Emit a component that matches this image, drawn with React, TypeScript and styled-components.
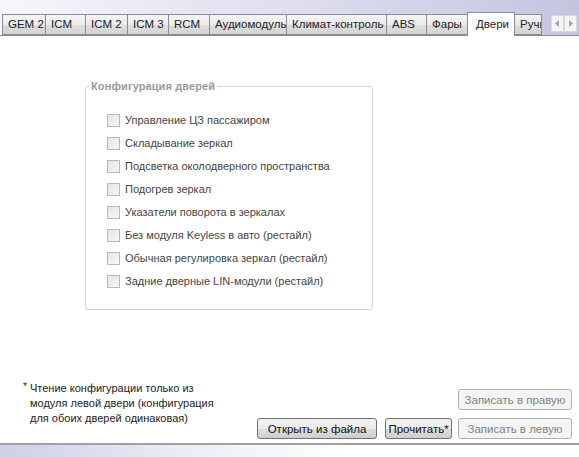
import styled, { createGlobalStyle } from "styled-components";

/*
 * DOOR CONFIGURATION TAB
 */

const GlobalStyle = createGlobalStyle`
  html, body { margin: 0; padding: 0; }
  body {
    width: 579px;
    height: 457px;
    overflow: hidden;
    font-family: "Liberation Sans", Arial, sans-serif;
    font-size: 11px;
    color: #333;
    background: #fff;
  }
`;

const tabs = [
  { label: "GEM 2", w: 44 },
  { label: "ICM", w: 41 },
  { label: "ICM 2", w: 43 },
  { label: "ICM 3", w: 42 },
  { label: "RCM", w: 42 },
  { label: "Аудиомодуль", w: 78 },
  { label: "Климат-контроль", w: 101 },
  { label: "ABS", w: 41 },
  { label: "Фары", w: 42 },
  { label: "Двери", w: 48, active: true },
  { label: "Ручн", w: 28 },
];

const options = [
  "Управление ЦЗ пассажиром",
  "Складывание зеркал",
  "Подсветка околодверного пространства",
  "Подогрев зеркал",
  "Указатели поворота в зеркалах",
  "Без модуля Keyless в авто (рестайл)",
  "Обычная регулировка зеркал (рестайл)",
  "Задние дверные LIN-модули (рестайл)",
];

const App = () => {
  return (
    <>
      <GlobalStyle />
      <Page>
        <TabBar>
          {tabs.map((t) => (
            <Tab key={t.label} $w={t.w} $active={!!t.active}>
              {t.label}
            </Tab>
          ))}
          <Scroller>
            <ScrollBtn>
              <svg width="5" height="7" viewBox="0 0 5 7"><path d="M4 0L0 3.5L4 7Z" fill="#a0a0a0" /></svg>
            </ScrollBtn>
            <ScrollBtn>
              <svg width="5" height="7" viewBox="0 0 5 7"><path d="M1 0L5 3.5L1 7Z" fill="#a0a0a0" /></svg>
            </ScrollBtn>
          </Scroller>
        </TabBar>
        <Content>
          <GroupBox>
            <Legend>Конфигурация дверей</Legend>
            <OptionList>
              {options.map((o) => (
                <Option key={o}>
                  <Box />
                  <span>{o}</span>
                </Option>
              ))}
            </OptionList>
          </GroupBox>
          <Footer>
            <Note>
              <span className="star">*</span> Чтение конфигурации только из
              <br />
              модуля левой двери (конфигурация
              <br />
              для обоих дверей одинаковая)
            </Note>
            <Button $w={120}>Открыть из файла</Button>
            <Button $w={67}>Прочитать*</Button>
            <RightCol>
              <Button $w={114} disabled>Записать в правую</Button>
              <Button $w={114} disabled>Записать в левую</Button>
            </RightCol>
          </Footer>
        </Content>
        <BottomStrip />
      </Page>
    </>
  );
};

const Page = styled.div`
  display: flex;
  flex-direction: column;
  height: 457px;
  width: 579px;
`;

const TabBar = styled.div`
  height: 36px;
  display: flex;
  align-items: flex-end;
  padding-left: 2px;
  background: linear-gradient(to right, #f6f6fb 0%, #dcdcee 55%, #c4c4e0 100%);
  border-bottom: 1px solid #898c95;
  box-sizing: border-box;
  position: relative;
`;

const Tab = styled.div<{ $w: number; $active: boolean }>`
  width: ${(p) => p.$w}px;
  flex: none;
  box-sizing: border-box;
  height: ${(p) => (p.$active ? 24 : 21)}px;
  margin-bottom: ${(p) => (p.$active ? -1 : 0)}px;
  padding: ${(p) => (p.$active ? "5px 0 0 8px" : "3px 0 0 5px")};
  border: 1px solid #898c95;
  border-bottom: ${(p) => (p.$active ? "none" : "1px solid #898c95")};
  margin-right: -1px;
  background: ${(p) =>
    p.$active ? "#fff" : "linear-gradient(to bottom, #f5f5f5 0%, #ebebeb 50%, #dedede 51%, #d4d4d4 100%)"};
  color: #222;
  font-size: 11.5px;
  white-space: nowrap;
  overflow: hidden;
  position: relative;
  z-index: ${(p) => (p.$active ? 2 : 1)};
`;

const Scroller = styled.div`
  position: absolute;
  right: 2px;
  top: 15px;
  display: flex;
  z-index: 3;
`;

const ScrollBtn = styled.div`
  width: 13px;
  height: 17px;
  box-sizing: border-box;
  border: 1px solid #d8d8d8;
  background: #f4f4f4;
  display: flex;
  align-items: center;
  justify-content: center;
`;

const Content = styled.div`
  flex: 1;
  display: flex;
  flex-direction: column;
  background: #fff;
  border-bottom: 2px solid #a0a0a0;
`;

const GroupBox = styled.fieldset`
  margin: 44px 0 0 85px;
  width: 288px;
  height: 230px;
  box-sizing: border-box;
  border: 1px solid #d5d5d5;
  border-radius: 3px;
  padding: 0;
`;

const Legend = styled.legend`
  padding: 0 2px;
  margin-left: 3px;
  color: #9a9a9a;
  font-weight: bold;
  font-size: 11px;
  letter-spacing: 0.1px;
`;

const OptionList = styled.div`
  display: flex;
  flex-direction: column;
  gap: 9px;
  margin-top: 21px;
  padding-left: 21px;
`;

const Option = styled.label`
  display: flex;
  align-items: center;
  gap: 5px;
  height: 14px;
  color: #444;
  font-size: 11px;
  white-space: nowrap;
`;

const Box = styled.span`
  width: 13px;
  height: 13px;
  box-sizing: border-box;
  border: 1px solid #b8b8b8;
  background: linear-gradient(135deg, #e6e6e6, #f6f6f6);
  flex: none;
`;

const Footer = styled.div`
  margin-top: auto;
  display: flex;
  align-items: flex-end;
  padding: 0 7px 4px 0;
`;

const Note = styled.div`
  flex: 1;
  padding-left: 30px;
  margin-bottom: 13px;
  line-height: 15px;
  font-size: 11px;
  color: #222;
  position: relative;

  .star {
    position: absolute;
    left: 23px;
    top: -2px;
    font-size: 10px;
  }
`;

const Button = styled.button<{ $w: number }>`
  width: ${(p) => p.$w}px;
  height: 21px;
  margin-left: 8px;
  box-sizing: border-box;
  font-family: "Liberation Sans", Arial, sans-serif;
  font-size: 11.5px;
  color: #111;
  border: 1px solid #707070;
  border-radius: 3px;
  padding: 0;
  background: linear-gradient(to bottom, #f2f2f2 0%, #ebebeb 50%, #dddddd 51%, #cfcfcf 100%);
  white-space: nowrap;

  &:disabled {
    color: #838383;
    border-color: #adb2b5;
    background: #f4f4f4;
  }
`;

const RightCol = styled.div`
  display: flex;
  flex-direction: column;
  gap: 8px;
  margin-left: 6px;

  & > button {
    margin-left: 0;
  }
`;

const BottomStrip = styled.div`
  height: 12px;
  background: linear-gradient(to right, #cfcfe6 0%, #ebebf5 30%, #ffffff 60%, #ffffff 100%);
`;

export default App;
